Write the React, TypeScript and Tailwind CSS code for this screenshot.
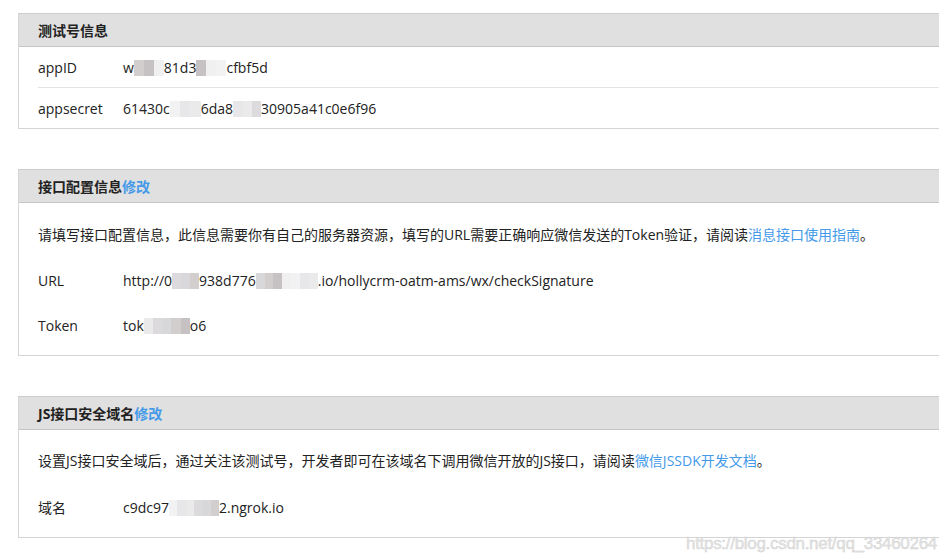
import type { ReactNode } from 'react'

const shades = ['#e6e6e6', '#c9c2c2', '#f0f0f0', '#d4d2d4', '#b9b2b3', '#e2e2e4', '#cfcfd3', '#ededed']

function Mosaic({ w, seed = 0 }: { w: number; seed?: number }) {
  const cells = Math.max(1, Math.round(w / 9))
  return (
    <span className="inline-flex h-[16px] align-[-3px] opacity-80" style={{ width: w }}>
      {Array.from({ length: cells }).map((_, i) => (
        <span key={i} className="h-full flex-1" style={{ backgroundColor: shades[(i * 3 + seed) % shades.length] }} />
      ))}
    </span>
  )
}

function Panel({ title, link, children }: { title: string; link?: boolean; children: ReactNode }) {
  return (
    <section className="w-[960px] border-t border-l border-b border-t-[#cdcdcd] border-l-[#d6d6d6] border-b-[#d4d4d4] bg-white">
      <header className="h-[33px] bg-[#e0e0e0] border-b border-[#c6c6c6] pl-[19px] flex items-center">
        <h2 className="text-[14px] font-bold text-[#222]">
          {title}
          {link && <a className="text-[#459ae9] font-bold">修改</a>}
        </h2>
      </header>
      {children}
    </section>
  )
}

function Row({ label, children }: { label: string; children: ReactNode }) {
  return (
    <div className="flex items-center">
      <span className="w-[85px] shrink-0">{label}</span>
      <span className="whitespace-nowrap">{children}</span>
    </div>
  )
}

export default function App() {
  return (
    <div className="relative w-[939px] h-[559px] overflow-hidden bg-white text-[14px] text-[#222] font-['Open_Sans','Noto_Sans_CJK_SC',sans-serif]">
      <div className="pt-[13px] pl-[18px] flex flex-col gap-[40px]">
        <Panel title="测试号信息">
          <div className="pl-[19px]">
            <div className="h-[41px] border-b border-[#e3e3e3] flex items-center">
              <Row label="appID">
                w<Mosaic w={30} seed={1} />81d3<Mosaic w={30} seed={4} />cfbf5d
              </Row>
            </div>
            <div className="h-[40px] flex items-center">
              <Row label="appsecret">
                61430c<Mosaic w={31} seed={2} />6da8<Mosaic w={28} seed={5} />30905a41c0e6f96
              </Row>
            </div>
          </div>
        </Panel>

        <Panel title="接口配置信息" link>
          <div className="pl-[19px] pt-[21px] pb-[19px] flex flex-col gap-[23px]">
            <p className="h-[22px] leading-[22px] whitespace-nowrap">
              请填写接口配置信息，此信息需要你有自己的服务器资源，填写的URL需要正确响应微信发送的Token验证，请阅读
              <a className="text-[#459ae9]">消息接口使用指南</a>。
            </p>
            <div className="h-[22px] flex items-center">
              <Row label="URL">
                http://0<Mosaic w={27} seed={3} />938d776<Mosaic w={62} seed={6} />.io/hollycrm-oatm-ams/wx/checkSignature
              </Row>
            </div>
            <div className="h-[22px] flex items-center">
              <Row label="Token">
                tok<Mosaic w={46} seed={0} />o6
              </Row>
            </div>
          </div>
        </Panel>

        <Panel title="JS接口安全域名" link>
          <div className="pl-[19px] pt-[20px] pb-[19px] flex flex-col gap-[24px]">
            <p className="h-[22px] leading-[22px] whitespace-nowrap">
              设置JS接口安全域后，通过关注该测试号，开发者即可在该域名下调用微信开放的JS接口，请阅读
              <a className="text-[#459ae9]">微信JSSDK开发文档</a>。
            </p>
            <div className="h-[22px] flex items-center">
              <Row label="域名">
                c9dc97<Mosaic w={50} seed={2} />2.ngrok.io
              </Row>
            </div>
          </div>
        </Panel>
      </div>

      <span className="absolute left-[686px] top-[531px] text-[17px] tracking-[-0.3px] text-[#e4e4e4] font-['Liberation_Sans',sans-serif] [-webkit-text-stroke:0.4px_#d0d0d0]">
        https://blog.csdn.net/qq_33460264
      </span>
    </div>
  )
}
